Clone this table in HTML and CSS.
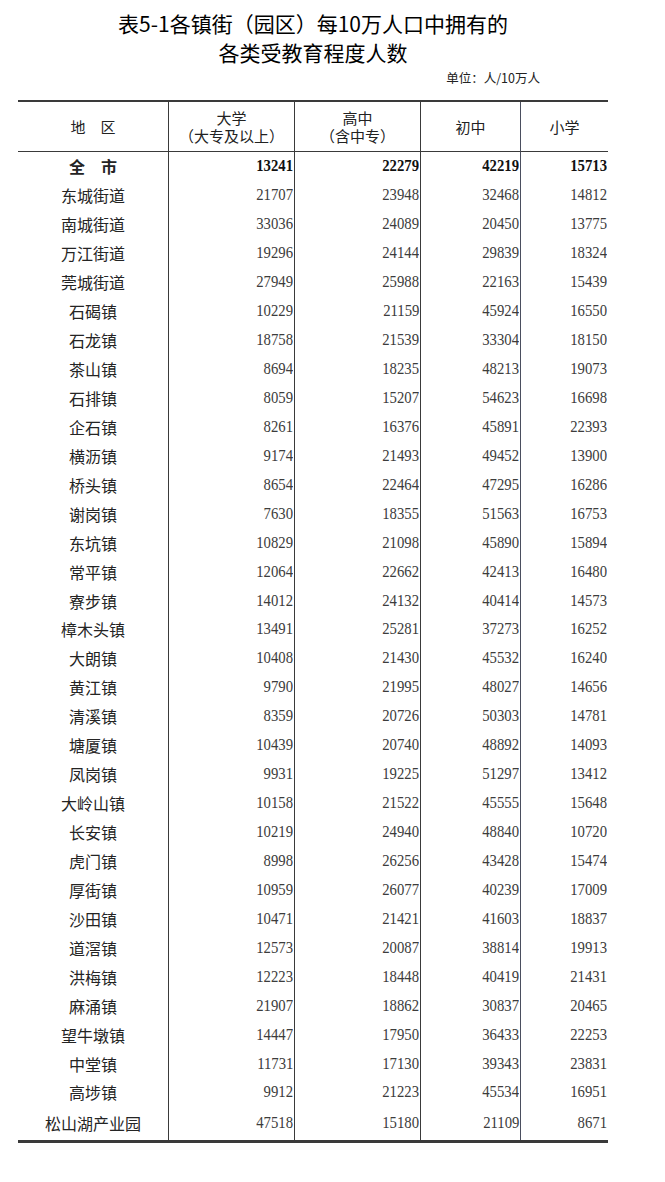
FILE: index.html
```html
<!DOCTYPE html>
<html lang="zh-CN">
<head>
<meta charset="utf-8">
<title>表5-1</title>
<link rel="stylesheet" href="styles.css">
</head>
<body>
<div class="page">
  <h1 class="title">表5-1各镇街（园区）每10万人口中拥有的<br>各类受教育程度人数</h1>
  <div class="unit">单位：人/10万人</div>
  <div class="table">
    <div class="c head">地　区</div>
    <div class="c head">大学<br>（大专及以上）</div>
    <div class="c head">高中<br>（含中专）</div>
    <div class="c head">初中</div>
    <div class="c head">小学</div>

    <div class="c name total">全　市</div>
    <div class="c num total"><span>13241</span></div>
    <div class="c num total"><span>22279</span></div>
    <div class="c num total"><span>42219</span></div>
    <div class="c num total"><span>15713</span></div>

    <div class="c name">东城街道</div><div class="c num"><span>21707</span></div><div class="c num"><span>23948</span></div><div class="c num"><span>32468</span></div><div class="c num"><span>14812</span></div>
    <div class="c name">南城街道</div><div class="c num"><span>33036</span></div><div class="c num"><span>24089</span></div><div class="c num"><span>20450</span></div><div class="c num"><span>13775</span></div>
    <div class="c name">万江街道</div><div class="c num"><span>19296</span></div><div class="c num"><span>24144</span></div><div class="c num"><span>29839</span></div><div class="c num"><span>18324</span></div>
    <div class="c name">莞城街道</div><div class="c num"><span>27949</span></div><div class="c num"><span>25988</span></div><div class="c num"><span>22163</span></div><div class="c num"><span>15439</span></div>
    <div class="c name">石碣镇</div><div class="c num"><span>10229</span></div><div class="c num"><span>21159</span></div><div class="c num"><span>45924</span></div><div class="c num"><span>16550</span></div>
    <div class="c name">石龙镇</div><div class="c num"><span>18758</span></div><div class="c num"><span>21539</span></div><div class="c num"><span>33304</span></div><div class="c num"><span>18150</span></div>
    <div class="c name">茶山镇</div><div class="c num"><span>8694</span></div><div class="c num"><span>18235</span></div><div class="c num"><span>48213</span></div><div class="c num"><span>19073</span></div>
    <div class="c name">石排镇</div><div class="c num"><span>8059</span></div><div class="c num"><span>15207</span></div><div class="c num"><span>54623</span></div><div class="c num"><span>16698</span></div>
    <div class="c name">企石镇</div><div class="c num"><span>8261</span></div><div class="c num"><span>16376</span></div><div class="c num"><span>45891</span></div><div class="c num"><span>22393</span></div>
    <div class="c name">横沥镇</div><div class="c num"><span>9174</span></div><div class="c num"><span>21493</span></div><div class="c num"><span>49452</span></div><div class="c num"><span>13900</span></div>
    <div class="c name">桥头镇</div><div class="c num"><span>8654</span></div><div class="c num"><span>22464</span></div><div class="c num"><span>47295</span></div><div class="c num"><span>16286</span></div>
    <div class="c name">谢岗镇</div><div class="c num"><span>7630</span></div><div class="c num"><span>18355</span></div><div class="c num"><span>51563</span></div><div class="c num"><span>16753</span></div>
    <div class="c name">东坑镇</div><div class="c num"><span>10829</span></div><div class="c num"><span>21098</span></div><div class="c num"><span>45890</span></div><div class="c num"><span>15894</span></div>
    <div class="c name">常平镇</div><div class="c num"><span>12064</span></div><div class="c num"><span>22662</span></div><div class="c num"><span>42413</span></div><div class="c num"><span>16480</span></div>
    <div class="c name">寮步镇</div><div class="c num"><span>14012</span></div><div class="c num"><span>24132</span></div><div class="c num"><span>40414</span></div><div class="c num"><span>14573</span></div>
    <div class="c name">樟木头镇</div><div class="c num"><span>13491</span></div><div class="c num"><span>25281</span></div><div class="c num"><span>37273</span></div><div class="c num"><span>16252</span></div>
    <div class="c name">大朗镇</div><div class="c num"><span>10408</span></div><div class="c num"><span>21430</span></div><div class="c num"><span>45532</span></div><div class="c num"><span>16240</span></div>
    <div class="c name">黄江镇</div><div class="c num"><span>9790</span></div><div class="c num"><span>21995</span></div><div class="c num"><span>48027</span></div><div class="c num"><span>14656</span></div>
    <div class="c name">清溪镇</div><div class="c num"><span>8359</span></div><div class="c num"><span>20726</span></div><div class="c num"><span>50303</span></div><div class="c num"><span>14781</span></div>
    <div class="c name">塘厦镇</div><div class="c num"><span>10439</span></div><div class="c num"><span>20740</span></div><div class="c num"><span>48892</span></div><div class="c num"><span>14093</span></div>
    <div class="c name">凤岗镇</div><div class="c num"><span>9931</span></div><div class="c num"><span>19225</span></div><div class="c num"><span>51297</span></div><div class="c num"><span>13412</span></div>
    <div class="c name">大岭山镇</div><div class="c num"><span>10158</span></div><div class="c num"><span>21522</span></div><div class="c num"><span>45555</span></div><div class="c num"><span>15648</span></div>
    <div class="c name">长安镇</div><div class="c num"><span>10219</span></div><div class="c num"><span>24940</span></div><div class="c num"><span>48840</span></div><div class="c num"><span>10720</span></div>
    <div class="c name">虎门镇</div><div class="c num"><span>8998</span></div><div class="c num"><span>26256</span></div><div class="c num"><span>43428</span></div><div class="c num"><span>15474</span></div>
    <div class="c name">厚街镇</div><div class="c num"><span>10959</span></div><div class="c num"><span>26077</span></div><div class="c num"><span>40239</span></div><div class="c num"><span>17009</span></div>
    <div class="c name">沙田镇</div><div class="c num"><span>10471</span></div><div class="c num"><span>21421</span></div><div class="c num"><span>41603</span></div><div class="c num"><span>18837</span></div>
    <div class="c name">道滘镇</div><div class="c num"><span>12573</span></div><div class="c num"><span>20087</span></div><div class="c num"><span>38814</span></div><div class="c num"><span>19913</span></div>
    <div class="c name">洪梅镇</div><div class="c num"><span>12223</span></div><div class="c num"><span>18448</span></div><div class="c num"><span>40419</span></div><div class="c num"><span>21431</span></div>
    <div class="c name">麻涌镇</div><div class="c num"><span>21907</span></div><div class="c num"><span>18862</span></div><div class="c num"><span>30837</span></div><div class="c num"><span>20465</span></div>
    <div class="c name">望牛墩镇</div><div class="c num"><span>14447</span></div><div class="c num"><span>17950</span></div><div class="c num"><span>36433</span></div><div class="c num"><span>22253</span></div>
    <div class="c name">中堂镇</div><div class="c num"><span>11731</span></div><div class="c num"><span>17130</span></div><div class="c num"><span>39343</span></div><div class="c num"><span>23831</span></div>
    <div class="c name">高埗镇</div><div class="c num"><span>9912</span></div><div class="c num"><span>21223</span></div><div class="c num"><span>45534</span></div><div class="c num"><span>16951</span></div>
    <div class="c name last">松山湖产业园</div><div class="c num last"><span>47518</span></div><div class="c num last"><span>15180</span></div><div class="c num last"><span>21109</span></div><div class="c num last"><span>8671</span></div>
  </div>
</div>
</body>
</html>
```

FILE: styles.css
```css
html, body {
  margin: 0;
  padding: 0;
  background: #ffffff;
}

body {
  font-family: "Noto Sans CJK SC", "Noto Sans", sans-serif;
  color: #1e1e1e;
}

.page {
  margin-left: 18px;
  width: 590px;
  padding-top: 8.5px;
}

.title {
  margin: 0;
  font-size: 21px;
  line-height: 29px;
  font-weight: 400;
  text-align: center;
  color: #000;
}

.unit {
  margin-top: 3px;
  margin-bottom: 14.5px;
  padding-right: 68px;
  text-align: right;
  font-size: 12.5px;
  line-height: 16px;
  color: #222;
}

.table {
  display: grid;
  grid-template-columns: 151px 126px 126px 100px 87px;
  grid-template-rows: 50px repeat(33, 28.94px) 33px;
  border-top: 2px solid #3a3a3a;
  border-bottom: 3px solid #3a3a3a;
}

.c {
  box-sizing: border-box;
  border-right: 1px solid #3a3a3a;
  display: flex;
  align-items: center;
  min-width: 0;
}

.c:nth-child(5n) {
  border-right: none;
}

.c:nth-child(5n+4) {
  border-right-color: #4a4e5e;
}

.head {
  border-bottom: 1px solid #3a3a3a;
  justify-content: center;
  font-size: 15px;
  line-height: 18px;
  color: #222;
  text-align: center;
}

.name {
  justify-content: center;
  font-size: 16px;
  line-height: 20px;
  color: #242424;
}

.name.total {
  font-weight: 700;
}

.num {
  justify-content: flex-end;
  padding-right: 1px;
  font-family: "Liberation Serif", "Times New Roman", serif;
  font-size: 16px;
  line-height: 20px;
  color: #3c3c3c;
}

.num span {
  display: inline-block;
  transform: scaleX(0.92);
  transform-origin: right center;
}

.num.total {
  font-weight: 700;
  color: #111;
}
```
